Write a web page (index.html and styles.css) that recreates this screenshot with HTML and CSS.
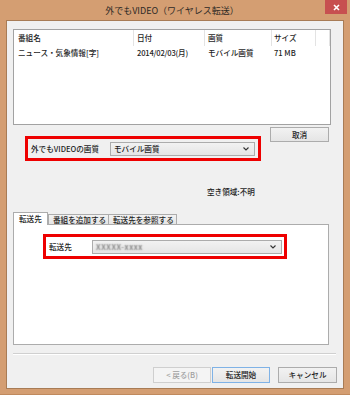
FILE: index.html
```
<!DOCTYPE html>
<html lang="ja">
<head>
    <meta charset="UTF-8">
    <title>外でもVIDEO（ワイヤレス転送）</title>
    <link rel="stylesheet" href="styles.css">
</head>
<body>
    <div class="window">
        <div class="titlebar">
            <span></span>
            <div class="title">外でもVIDEO（ワイヤレス転送）</div>
            <div class="close">
                <svg width="7" height="7" viewBox="0 0 7 7"><path d="M1 1L6 6M6 1L1 6" stroke="#fff" stroke-width="1.6"/></svg>
            </div>
        </div>
        <div class="client">
            <div class="list">
                <div class="list-row list-head">
                    <div class="col col-name">番組名</div>
                    <div class="col col-date">日付</div>
                    <div class="col col-quality">画質</div>
                    <div class="col col-size">サイズ</div>
                    <div class="col col-rest"></div>
                </div>
                <div class="list-row">
                    <div class="col col-name">ニュース・気象情報[字]</div>
                    <div class="col col-date">2014/02/03(月)</div>
                    <div class="col col-quality">モバイル画質</div>
                    <div class="col col-size">71 MB</div>
                </div>
            </div>

            <div class="quality-row">
                <div class="highlight quality-box">
                    <span class="field-label">外でもVIDEOの画質</span>
                    <div class="combo combo-quality">
                        <span>モバイル画質</span>
                        <svg class="chevron" width="6" height="4" viewBox="0 0 6 4"><path d="M0.5 0.5L3 3L5.5 0.5" fill="none" stroke="#333" stroke-width="1.1"/></svg>
                    </div>
                </div>
                <button class="btn btn-stop">取消</button>
            </div>

            <div class="free-space">空き領域:不明</div>

            <div class="tabs">
                <div class="tab active">転送先</div>
                <div class="tab">番組を追加する</div>
                <div class="tab">転送先を参照する</div>
            </div>
            <div class="tab-panel">
                <div class="highlight dest-box">
                    <span class="field-label">転送先</span>
                    <div class="combo combo-dest">
                        <span class="blurred">XXXXX-xxxx</span>
                        <svg class="chevron" width="6" height="4" viewBox="0 0 6 4"><path d="M0.5 0.5L3 3L5.5 0.5" fill="none" stroke="#333" stroke-width="1.1"/></svg>
                    </div>
                </div>
            </div>

            <div class="separator"></div>

            <div class="footer">
                <button class="btn btn-back" disabled>&lt; 戻る(B)</button>
                <button class="btn btn-start">転送開始</button>
                <button class="btn btn-cancel">キャンセル</button>
            </div>
        </div>
    </div>
</body>
</html>
```

FILE: styles.css
```
body {
    margin: 0;
    font-family: "Noto Sans CJK JP", "Noto Sans", sans-serif;
    font-size: 7.6px;
    font-weight: 500;
    color: #1e1e1e;
}

.window {
    width: 350px;
    height: 395px;
    box-sizing: border-box;
    background-color: #d49e72;
    border-bottom: 1px solid #c08a5e;
    display: flex;
    flex-direction: column;
}

.titlebar {
    height: 20px;
    display: grid;
    grid-template-columns: 1fr auto 1fr;
}

.title {
    font-size: 9px;
    font-weight: 400;
    line-height: 22px;
    color: #2e2a26;
    padding-right: 6px;
}

.close {
    justify-self: end;
    width: 22px;
    height: 14px;
    margin-right: 3px;
    background-color: #c75050;
    display: flex;
    justify-content: center;
    align-items: center;
}

.client {
    margin: 0 6px 5px 6px;
    height: 369px;
    box-sizing: border-box;
    border: 1px solid #a87c56;
    background-color: #f0f0f0;
    display: flex;
    flex-direction: column;
}

/* program list */
.list {
    margin: 8px 0 0 6px;
    width: 318px;
    height: 96px;
    box-sizing: border-box;
    border: 1px solid #a2a2a2;
    background-color: #fff;
}

.list-row {
    display: flex;
    height: 14px;
    line-height: 14px;
}

.list-head {
    height: 16px;
    line-height: 16px;
}

.col {
    box-sizing: border-box;
    padding-left: 4px;
    white-space: nowrap;
}

.list-head .col {
    border-right: 1px solid #e3e3e3;
}

.col-name { width: 120px; }
.col-date { width: 71px; padding-left: 3px; }
.col-quality { width: 67px; padding-left: 3px; }
.col-size { width: 44px; padding-left: 2px; }
.col-rest { width: 14px; }

.list-row .col-date {
    letter-spacing: -0.2px;
}

/* quality + cancel */
.quality-row {
    margin-top: 2px;
    padding-left: 18px;
    display: grid;
    grid-template-columns: 236px 59px;
    column-gap: 9px;
    align-items: start;
}

.highlight {
    box-sizing: border-box;
    border: 3px solid #ee0000;
    height: 25px;
    display: flex;
    align-items: center;
    padding: 0 3px;
}

.quality-box {
    margin-top: 9px;
}

.field-label {
    white-space: nowrap;
}

.combo {
    margin-left: auto;
    height: 14px;
    box-sizing: border-box;
    border: 1px solid #acacac;
    background: linear-gradient(#f2f2f2, #e5e5e5);
    display: flex;
    align-items: center;
    justify-content: space-between;
    padding: 0 5px 0 3px;
    line-height: 12px;
}

.combo-quality {
    width: 145px;
}

.combo-dest {
    width: 190px;
}

.blurred {
    color: transparent;
    text-shadow: 0 0 1.5px #707070;
    letter-spacing: 0.6px;
}

.btn {
    font-family: inherit;
    font-size: 7.6px;
    font-weight: 500;
    color: #1e1e1e;
    width: 58px;
    height: 16px;
    padding: 0;
    line-height: 14px;
    box-sizing: border-box;
    border: 1px solid #acacac;
    background: linear-gradient(#f2f2f2, #e5e5e5);
}

.btn-stop {
    width: 59px;
    height: 15px;
}

.free-space {
    margin-top: 25px;
    padding-left: 200px;
    line-height: 11px;
}

/* tabs */
.tabs {
    margin: 15px 0 0 6px;
    display: flex;
    align-items: flex-end;
}

.tab {
    box-sizing: border-box;
    height: 10px;
    line-height: 9px;
    padding: 0 4px;
    border: 1px solid #acacac;
    border-bottom: none;
    background: linear-gradient(#f2f2f2, #e5e5e5);
    white-space: nowrap;
}

.tab + .tab {
    border-left: none;
}

.tab.active {
    height: 13px;
    line-height: 12px;
    width: 35px;
    padding: 0 0 0 5px;
    margin-bottom: -1px;
    background: #fff;
    position: relative;
}

.tab.active + .tab {
    border-left: 1px solid #acacac;
    width: 61px;
}

.tab:last-child {
    width: 68px;
}

.tab-panel {
    margin-left: 6px;
    width: 316px;
    height: 121px;
    box-sizing: border-box;
    border: 1px solid #acacac;
    background-color: #fff;
    padding: 9px 0 0 29px;
}

.dest-box {
    width: 244px;
    padding-right: 2px;
}

.separator {
    margin: 8px 0 0 6px;
    width: 323px;
    border-top: 1px solid #d0d0d0;
    border-bottom: 1px solid #fff;
}

.footer {
    margin-top: 12px;
    padding-right: 6px;
    display: flex;
    justify-content: flex-end;
}

.btn-back {
    color: #a0a0a0;
    border-color: #cfcfcf;
    background: #f4f4f4;
    margin-right: 1px;
}

.btn-start {
    border-color: #7fb2e6;
    margin-right: 8px;
}

.btn-cancel {
    width: 59px;
}
```
